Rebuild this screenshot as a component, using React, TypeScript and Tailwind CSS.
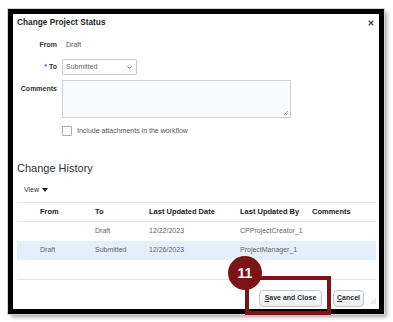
import { ChevronDown, X } from 'lucide-react'

// ------------------------------------------------------------
// Data
// ------------------------------------------------------------

const HISTORY = [
  { from: '', to: 'Draft', date: '12/22/2023', by: 'CPProjectCreator_1', comments: '', active: false },
  { from: 'Draft', to: 'Submitted', date: '12/26/2023', by: 'ProjectManager_1', comments: '', active: true },
]

const COLS = 'grid grid-cols-[55px_54px_91px_72px_1fr] pl-[23px]'

// ------------------------------------------------------------
// Form row
// ------------------------------------------------------------

function FieldLabel({ children, required }: { children: React.ReactNode; required?: boolean }) {
  return (
    <div className="w-[40px] shrink-0 text-right text-[7px] font-bold text-[#333]">
      {required && <span className="text-[#2e6cb5] mr-[2px]">*</span>}
      {children}
    </div>
  )
}

export default function App() {
  return (
    <div
      className="w-[393px] h-[322px] bg-white pt-[9px] pl-[8px]"
      style={{ fontFamily: '"Liberation Sans", Arial, sans-serif' }}
    >
      <div className="relative w-[376px] h-[305px] border-[5px] border-black bg-white outline outline-1 outline-[#d4d4d4] shadow-[3px_3px_4px_rgba(0,0,0,0.35)]">
        {/* ── Header ── */}
        <div className="flex items-center justify-between h-[17px] pl-[4px] pr-[4px]">
          <span className="text-[8.3px] font-bold text-[#1f1f1f]">Change Project Status</span>
          <X size={8} strokeWidth={3.5} className="text-[#444]" />
        </div>

        {/* ── Form ── */}
        <div className="flex flex-col pl-[4px]">
          <div className="flex items-center h-[16px] mt-[6px] gap-[5px]">
            <FieldLabel>From</FieldLabel>
            <span className="pl-[4px] text-[7px] text-[#555]">Draft</span>
          </div>

          <div className="flex items-center h-[16px] mt-[6px] gap-[5px]">
            <FieldLabel required>To</FieldLabel>
            <div className="flex items-center justify-between w-[75px] h-[16px] px-[3px] border border-[#c3c8ce] rounded-[2px] bg-white">
              <span className="text-[7px] text-[#666]">Submitted</span>
              <ChevronDown size={7} strokeWidth={3} className="text-[#555]" />
            </div>
          </div>

          <div className="flex items-start mt-[5px] gap-[5px]">
            <div className="mt-[4px]">
              <FieldLabel>Comments</FieldLabel>
            </div>
            <div className="relative w-[229px] h-[38px] border border-[#cdd2d8] bg-[#f9fafc]">
              <svg className="absolute right-[1px] bottom-[1px]" width="6" height="6" viewBox="0 0 6 6">
                <path d="M5 1L1 5M5 3L3 5" stroke="#9aa0a6" strokeWidth="0.8" />
              </svg>
            </div>
          </div>

          <div className="flex items-center h-[10px] mt-[8px] pl-[45px] gap-[5px]">
            <div className="w-[10px] h-[10px] border border-[#a9aeb4] rounded-[1px] bg-white" />
            <span className="text-[7px] text-[#555]">Include attachments in the workflow</span>
          </div>
        </div>

        {/* ── Change History ── */}
        <div className="pl-[4px] pr-[3px]">
          <div className="mt-[25px] h-[14px] flex items-center text-[11px] text-[#333]">Change History</div>

          <div className="mt-[9px] h-[12px] flex items-center gap-[3px] pl-[7px] text-[7px] text-[#333]">
            View
            <svg width="6" height="4" viewBox="0 0 6 4">
              <path d="M0 0H6L3 4Z" fill="#222" />
            </svg>
          </div>

          <div className="mt-[6px] border-t border-[#e3e3e3]">
            <div className={`${COLS} h-[19px] items-center border-b border-[#e3e3e3] text-[7.5px] font-bold text-[#222]`}>
              <span>From</span>
              <span>To</span>
              <span>Last Updated Date</span>
              <span>Last Updated By</span>
              <span>Comments</span>
            </div>
            <div className="h-[58px] border-b border-[#e3e3e3]">
              {HISTORY.map((row) => (
                <div
                  key={row.date}
                  className={`${COLS} h-[19px] items-center text-[7px] text-[#666] ${row.active ? 'bg-[#e3effb]' : ''}`}
                >
                  <span>{row.from}</span>
                  <span>{row.to}</span>
                  <span>{row.date}</span>
                  <span>{row.by}</span>
                  <span>{row.comments}</span>
                </div>
              ))}
            </div>
          </div>

          {/* ── Footer buttons ── */}
          <div className="flex justify-end gap-[11px] mt-[10px] pr-[12px]">
            <button className="h-[17px] w-[63px] rounded-[4px] border border-[#c2c6cb] bg-gradient-to-b from-[#fafbfc] to-[#eceef1] text-[7px] font-bold text-[#333]">
              <span className="underline">S</span>ave and Close
            </button>
            <button className="h-[17px] w-[31px] rounded-[4px] border border-[#c2c6cb] bg-gradient-to-b from-[#fafbfc] to-[#eceef1] text-[7px] font-bold text-[#333]">
              <span className="underline">C</span>ancel
            </button>
          </div>
        </div>

        {/* resize grip */}
        <svg className="absolute right-[2px] bottom-[4px]" width="7" height="7" viewBox="0 0 7 7">
          <path d="M6 1L1 6M6 4L4 6" stroke="#c4c4c4" strokeWidth="0.8" />
        </svg>
      </div>

      {/* ── Annotation overlay ── */}
      <div className="absolute left-[245px] top-[276px] w-[86px] h-[39px] border-[4px] border-[#7a1418]" />
      <div className="absolute left-[228px] top-[256px] w-[34px] h-[34px] rounded-full bg-[#7a1418] flex items-center justify-center text-[14px] font-bold text-white">
        11
      </div>
    </div>
  )
}
